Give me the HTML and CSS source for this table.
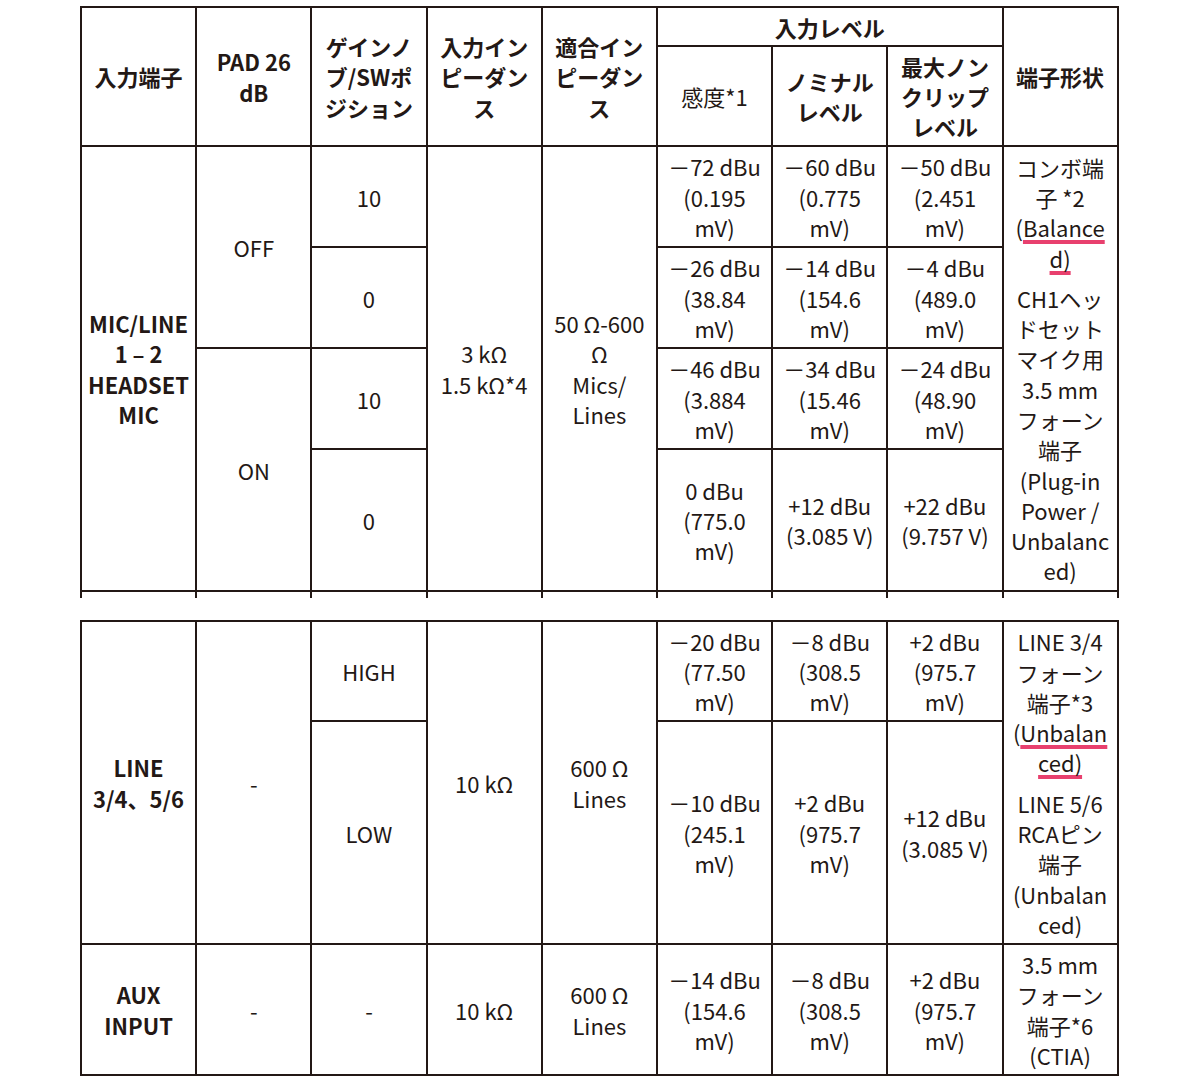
FILE: index.html
```html
<!DOCTYPE html>
<html lang="ja">
<head>
<meta charset="utf-8">
<title>入力端子仕様</title>
<link rel="stylesheet" href="styles.css">
</head>
<body>
<div class="page">
  <table class="spec spec-top">
    <colgroup>
      <col><col><col><col><col><col><col><col><col>
    </colgroup>
    <thead>
      <tr class="hrow1">
        <th rowspan="2">入力端子</th>
        <th rowspan="2">PAD 26<br>dB</th>
        <th rowspan="2">ゲインノ<br>ブ/SWポ<br>ジション</th>
        <th rowspan="2">入力イン<br>ピーダン<br>ス</th>
        <th rowspan="2">適合イン<br>ピーダン<br>ス</th>
        <th colspan="3">入力レベル</th>
        <th rowspan="2">端子形状</th>
      </tr>
      <tr class="hrow2">
        <th class="light">感度*1</th>
        <th>ノミナル<br>レベル</th>
        <th>最大ノン<br>クリップ<br>レベル</th>
      </tr>
    </thead>
    <tbody>
      <tr class="r101">
        <td rowspan="4" class="bold">MIC/LINE<br>1 – 2<br>HEADSET<br>MIC</td>
        <td rowspan="2">OFF</td>
        <td>10</td>
        <td rowspan="4">3 kΩ<br>1.5 kΩ*4</td>
        <td rowspan="4">50 Ω-600<br>Ω<br>Mics/<br>Lines</td>
        <td>－72 dBu<br>(0.195<br>mV)</td>
        <td>－60 dBu<br>(0.775<br>mV)</td>
        <td>－50 dBu<br>(2.451<br>mV)</td>
        <td rowspan="4">
          <div class="para">コンボ端<br>子 *2<br>(<span class="mark">Balance<br>d)</span></div>
          <div class="para">CH1ヘッ<br>ドセット<br>マイク用<br>3.5 mm<br>フォーン<br>端子<br>(Plug-in<br>Power /<br>Unbalanc<br>ed)</div>
        </td>
      </tr>
      <tr class="r101">
        <td>0</td>
        <td>－26 dBu<br>(38.84<br>mV)</td>
        <td>－14 dBu<br>(154.6<br>mV)</td>
        <td>－4 dBu<br>(489.0<br>mV)</td>
      </tr>
      <tr class="r101">
        <td rowspan="2">ON</td>
        <td>10</td>
        <td>－46 dBu<br>(3.884<br>mV)</td>
        <td>－34 dBu<br>(15.46<br>mV)</td>
        <td>－24 dBu<br>(48.90<br>mV)</td>
      </tr>
      <tr class="r142">
        <td>0</td>
        <td>0 dBu<br>(775.0<br>mV)</td>
        <td>+12 dBu<br>(3.085 V)</td>
        <td>+22 dBu<br>(9.757 V)</td>
      </tr>
      <tr class="stub">
        <td></td><td></td><td></td><td></td><td></td><td></td><td></td><td></td><td></td>
      </tr>
    </tbody>
  </table>

  <table class="spec spec-bottom">
    <colgroup>
      <col><col><col><col><col><col><col><col><col>
    </colgroup>
    <tbody>
      <tr class="r100">
        <td rowspan="2" class="bold">LINE<br>3/4、5/6</td>
        <td rowspan="2">-</td>
        <td>HIGH</td>
        <td rowspan="2">10 kΩ</td>
        <td rowspan="2">600 Ω<br>Lines</td>
        <td>－20 dBu<br>(77.50<br>mV)</td>
        <td>－8 dBu<br>(308.5<br>mV)</td>
        <td>+2 dBu<br>(975.7<br>mV)</td>
        <td rowspan="2">
          <div class="para">LINE 3/4<br>フォーン<br>端子*3<br>(<span class="mark">Unbalan<br>ced)</span></div>
          <div class="para">LINE 5/6<br>RCAピン<br>端子<br>(Unbalan<br>ced)</div>
        </td>
      </tr>
      <tr class="r223">
        <td>LOW</td>
        <td>－10 dBu<br>(245.1<br>mV)</td>
        <td>+2 dBu<br>(975.7<br>mV)</td>
        <td>+12 dBu<br>(3.085 V)</td>
      </tr>
      <tr class="r130">
        <td class="bold">AUX<br>INPUT</td>
        <td>-</td>
        <td>-</td>
        <td>10 kΩ</td>
        <td>600 Ω<br>Lines</td>
        <td>－14 dBu<br>(154.6<br>mV)</td>
        <td>－8 dBu<br>(308.5<br>mV)</td>
        <td>+2 dBu<br>(975.7<br>mV)</td>
        <td>3.5 mm<br>フォーン<br>端子*6<br>(CTIA)</td>
      </tr>
    </tbody>
  </table>
</div>
</body>
</html>
```

FILE: styles.css
```css
html, body {
  margin: 0;
  padding: 0;
  background: #ffffff;
}

body {
  font-family: "Noto Sans CJK JP", "Noto Sans", sans-serif;
  font-size: 22px;
  line-height: 30.3px;
  color: #231815;
}

.page {
  padding: 6px 0 0 80px;
}

.spec {
  border-collapse: collapse;
  table-layout: fixed;
  width: 1037px;
}

.spec col {
  width: 115.2px;
}

.spec th,
.spec td {
  border: 2px solid #231815;
  padding: 3.5px 4px;
  text-align: center;
  vertical-align: middle;
  white-space: nowrap;
}

.spec th {
  font-weight: 700;
}

.spec th.light {
  font-weight: 400;
}

.spec td.bold {
  font-weight: 700;
}

.para + .para {
  margin-top: 10px;
}

.mark {
  text-decoration: underline;
  text-decoration-color: #e8406e;
  text-decoration-thickness: 4px;
  text-underline-offset: 3px;
  text-decoration-skip-ink: none;
}

.spec-top .r101 {
  height: 101px;
}

.spec-top .r142 {
  height: 142px;
}

.spec-top .stub td {
  height: 6px;
  padding: 0;
  border-bottom: none;
  border-top: 2px solid #231815;
}

.spec-bottom {
  margin-top: 22px;
}

.spec-bottom .r100 {
  height: 100px;
}

.spec-bottom .r223 {
  height: 223px;
}

.spec-bottom .r130 {
  height: 131px;
}
```
